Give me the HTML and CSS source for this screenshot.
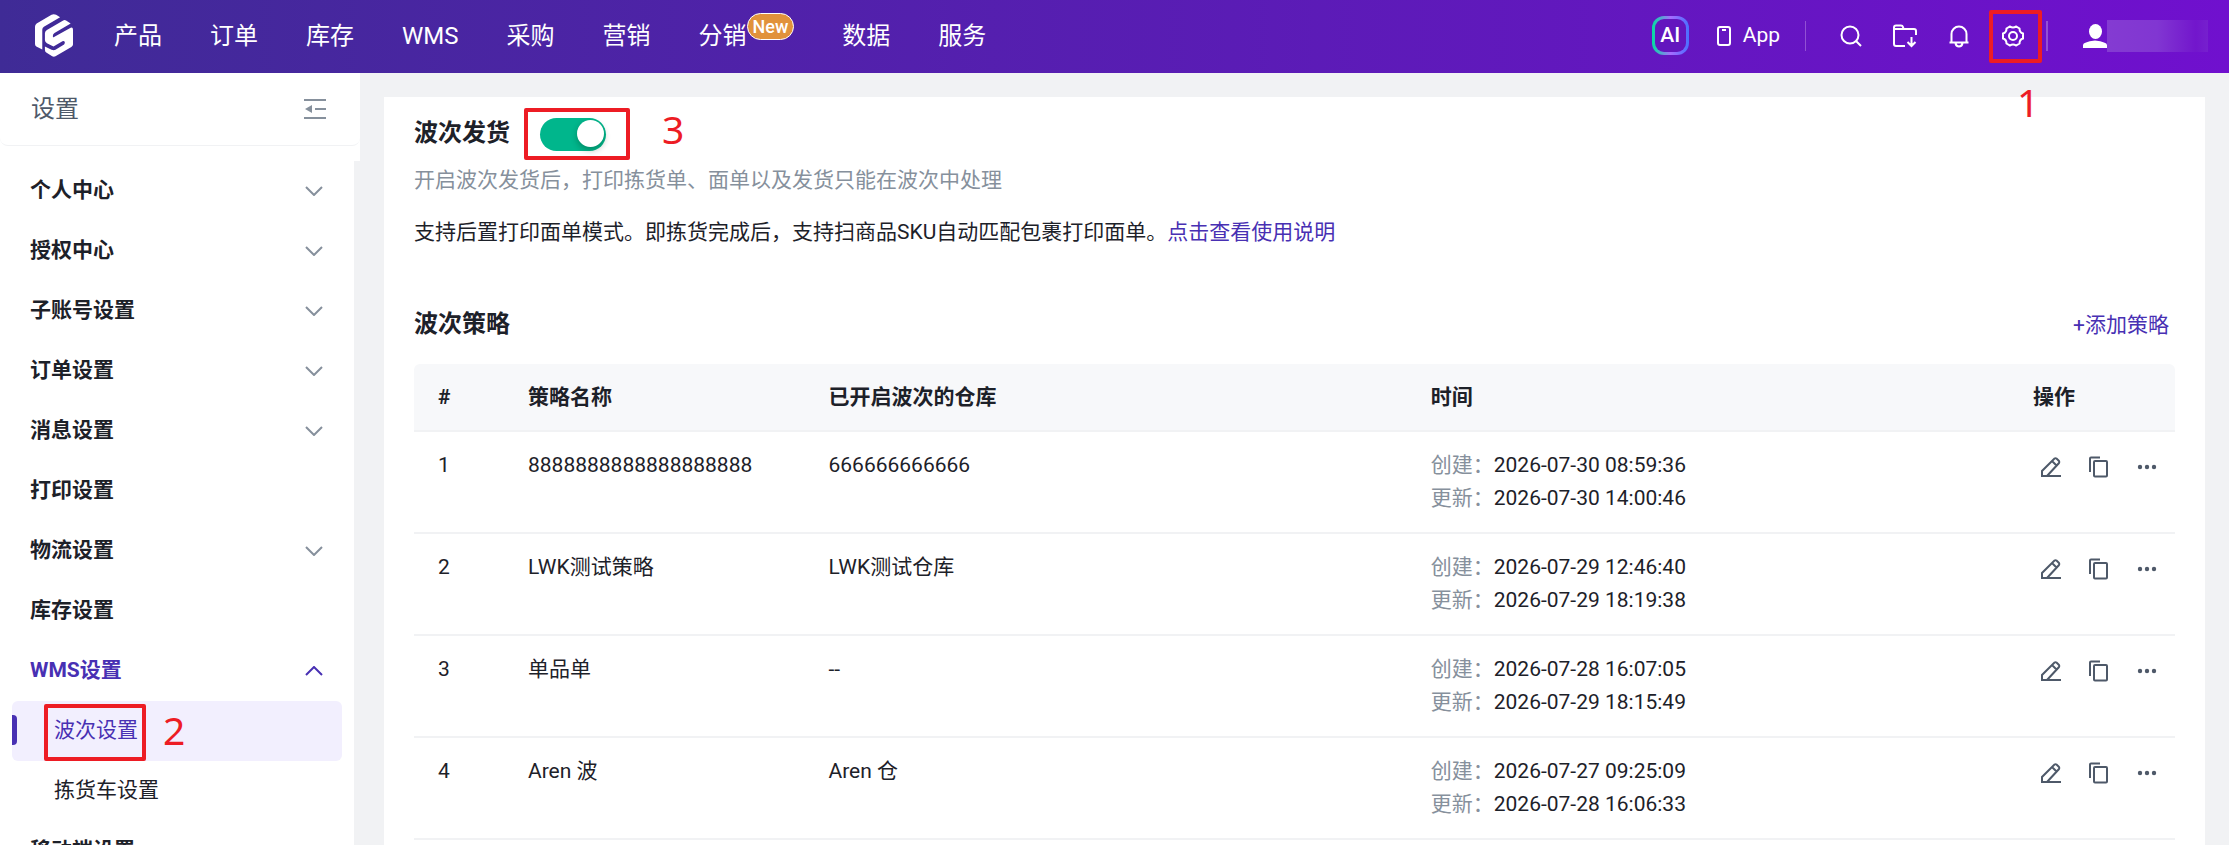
FILE: index.html
```html
<!DOCTYPE html>
<html lang="zh-CN">
<head>
  <meta charset="UTF-8" />
  <meta name="viewport" content="width=device-width, initial-scale=1.0"/>
  <title>波次设置</title>
  <link rel="stylesheet" href="styles.css">
</head>
<body>
  <!-- shared icons -->
  <svg class="sprite" aria-hidden="true">
    <symbol id="i-down" viewBox="0 0 18 10"><path d="M1 1l8 8 8-8"/></symbol>
    <symbol id="i-up" viewBox="0 0 18 10"><path d="M1 9l8-8 8 8"/></symbol>
    <symbol id="i-edit" viewBox="0 0 24 24"><path d="M3 21v-5L15.500 3.500q1-.7 2 0l2.500 2.500q.7 1 0 2L8 21M13 6l4.500 4.500M2 21h20"/></symbol>
    <symbol id="i-copy" viewBox="0 0 24 24"><path d="M3 17V3.500q0-1 1-1h9"/><rect x="7" y="6" width="13" height="15.500" rx="1"/></symbol>
    <symbol id="i-more" viewBox="0 0 24 24"><circle cx="5" cy="12" r="2.200"/><circle cx="12" cy="12" r="2.200"/><circle cx="19" cy="12" r="2.200"/></symbol>
  </svg>

  <header class="topbar">
    <a href="#" class="logo" aria-label="首页">
      <svg viewBox="0 0 115 129"><path d="M50 2Q57-2 64 2L76 9 27 38Q22 41 22 47V107L4 98Q0 95 0 90V38Q0 32 5 28Z"/><path d="M84 20Q89 16 94 19L108 28 59 57Q54 60 54 66T59 68L108 41Q115 39 115 47V92Q115 96 110 99L62 127Q57 130 52 127L34 116Q30 114 30 108V98L50 108Q57 111 62 108L88 92Q91 88 90 84 88 79 83 82L56 98 36 88Q30 84 30 78V58Q30 52 36 48Z"/></svg>
    </a>
    <nav class="menu">
      <a href="#">产品</a>
      <a href="#">订单</a>
      <a href="#">库存</a>
      <a href="#">WMS</a>
      <a href="#">采购</a>
      <a href="#">营销</a>
      <a href="#">分销<span class="badge">New</span></a>
      <a href="#">数据</a>
      <a href="#">服务</a>
    </nav>
    <div class="tools">
      <button type="button" class="ai">AI</button>
      <a href="#" class="app">
        <svg viewBox="0 0 14 20"><rect x="1" y="1" width="12" height="18" rx="2"/><path d="M5 4h4"/></svg>
        App
      </a>
      <span class="divider"></span>
      <button type="button" class="tool" aria-label="搜索">
        <svg viewBox="0 0 24 24"><circle cx="11" cy="11" r="8.500"/><path d="M17 17l5 5"/></svg>
      </button>
      <button type="button" class="tool" aria-label="下载">
        <svg viewBox="0 0 24 24"><path d="M12 22H3q-2 0-2-2V3.500q0-2 2-2h5q1.500 0 2 1.500l.5 2H21q2 0 2 2V11M1 5h10M18.500 13v9M14.500 18l4 4 4-4"/></svg>
      </button>
      <button type="button" class="tool" aria-label="通知">
        <svg viewBox="0 0 24 24"><path d="M2.500 18.500h19M4.500 18v-8a7.500 7.500 0 0 1 15 0v8M8.500 19q.5 3.500 3.500 3.500t3.500-3.500"/></svg>
      </button>
      <button type="button" class="tool marked" aria-label="设置">
        <svg viewBox="0 0 24 24"><path d="M9 2.500q3 2 6 0l3.500 2q0 4 3.500 5v5q-3.500 1-3.500 5l-3.500 2q-3-2-6 0l-3.500-2q0-4-3.500-5v-5q3.500-1 3.500-5z"/><circle cx="12" cy="12" r="4"/></svg>
        <span class="mark mark-gear"></span>
        <span class="step step-gear">1</span>
      </button>
      <span class="divider bold"></span>
      <div class="user">
        <svg viewBox="0 0 24 24"><ellipse cx="12.500" cy="7.500" rx="6.500" ry="7.500"/><path d="M0 24v-3q0-3 12-4.500Q24 18 24 21v3z"/></svg>
        <span class="user-name"></span>
      </div>
    </div>
  </header>

  <div class="layout">
    <aside class="sidebar">
      <div class="side-head">
        <span>设置</span>
        <button type="button" aria-label="收起">
          <svg viewBox="0 0 22 20"><path d="M0 1h22M11 10h11M0 19h22"/><path class="tri" d="M8 6v8l-7-4z"/></svg>
        </button>
      </div>
      <nav class="side-list">
        <a href="#" class="group">个人中心<svg><use href="#i-down"/></svg></a>
        <a href="#" class="group">授权中心<svg><use href="#i-down"/></svg></a>
        <a href="#" class="group">子账号设置<svg><use href="#i-down"/></svg></a>
        <a href="#" class="group">订单设置<svg><use href="#i-down"/></svg></a>
        <a href="#" class="group">消息设置<svg><use href="#i-down"/></svg></a>
        <a href="#" class="group">打印设置</a>
        <a href="#" class="group">物流设置<svg><use href="#i-down"/></svg></a>
        <a href="#" class="group">库存设置</a>
        <a href="#" class="group open">WMS设置<svg><use href="#i-up"/></svg></a>
        <a href="#" class="sub active">
          <span class="marked">波次设置<span class="mark mark-menu"></span><span class="step step-menu">2</span></span>
        </a>
        <a href="#" class="sub">拣货车设置</a>
        <a href="#" class="group">移动端设置</a>
      </nav>
    </aside>

    <main class="panel">
      <section class="intro">
        <div class="switch-row">
          <label for="wave"><h1>波次发货</h1></label>
          <span class="marked">
            <input type="checkbox" id="wave" class="switch" checked />
            <span class="mark mark-switch"></span>
            <span class="step step-switch">3</span>
          </span>
        </div>
        <p class="hint">开启波次发货后，打印拣货单、面单以及发货只能在波次中处理</p>
        <p>支持后置打印面单模式。即拣货完成后，支持扫商品SKU自动匹配包裹打印面单。<a href="#">点击查看使用说明</a></p>
      </section>

      <div class="list-head">
        <h2>波次策略</h2>
        <a href="#">+添加策略</a>
      </div>

      <table>
        <colgroup>
          <col class="c-index" /><col /><col class="c-store" /><col class="c-time" /><col class="c-action" />
        </colgroup>
        <thead>
          <tr><th>#</th><th>策略名称</th><th>已开启波次的仓库</th><th>时间</th><th>操作</th></tr>
        </thead>
        <tbody>
          <tr>
            <td>1</td>
            <td>8888888888888888888</td>
            <td>666666666666</td>
            <td><span>创建：</span>2026-07-30 08:59:36<br><span>更新：</span>2026-07-30 14:00:46</td>
            <td><div class="actions">
              <button type="button" aria-label="编辑"><svg><use href="#i-edit"/></svg></button>
              <button type="button" aria-label="复制"><svg><use href="#i-copy"/></svg></button>
              <button type="button" aria-label="更多" class="more"><svg><use href="#i-more"/></svg></button>
            </div></td>
          </tr>
          <tr>
            <td>2</td>
            <td>LWK测试策略</td>
            <td>LWK测试仓库</td>
            <td><span>创建：</span>2026-07-29 12:46:40<br><span>更新：</span>2026-07-29 18:19:38</td>
            <td><div class="actions">
              <button type="button" aria-label="编辑"><svg><use href="#i-edit"/></svg></button>
              <button type="button" aria-label="复制"><svg><use href="#i-copy"/></svg></button>
              <button type="button" aria-label="更多" class="more"><svg><use href="#i-more"/></svg></button>
            </div></td>
          </tr>
          <tr>
            <td>3</td>
            <td>单品单</td>
            <td>--</td>
            <td><span>创建：</span>2026-07-28 16:07:05<br><span>更新：</span>2026-07-29 18:15:49</td>
            <td><div class="actions">
              <button type="button" aria-label="编辑"><svg><use href="#i-edit"/></svg></button>
              <button type="button" aria-label="复制"><svg><use href="#i-copy"/></svg></button>
              <button type="button" aria-label="更多" class="more"><svg><use href="#i-more"/></svg></button>
            </div></td>
          </tr>
          <tr>
            <td>4</td>
            <td>Aren 波</td>
            <td>Aren 仓</td>
            <td><span>创建：</span>2026-07-27 09:25:09<br><span>更新：</span>2026-07-28 16:06:33</td>
            <td><div class="actions">
              <button type="button" aria-label="编辑"><svg><use href="#i-edit"/></svg></button>
              <button type="button" aria-label="复制"><svg><use href="#i-copy"/></svg></button>
              <button type="button" aria-label="更多" class="more"><svg><use href="#i-more"/></svg></button>
            </div></td>
          </tr>
        </tbody>
      </table>
    </main>
  </div>
</body>
</html>
```

FILE: styles.css
```css
* {
  box-sizing: border-box;
}

body {
  margin: 0;
  height: 100vh;
  display: flex;
  flex-direction: column;
  overflow: hidden;
  font-family: Roboto, "Noto Sans CJK SC", sans-serif;
  font-size: 21px;
  line-height: 33px;
  color: #1d2129;
  background-color: #f1f2f4;
}

h1, h2, p {
  margin: 0;
}

h1, h2 {
  font-size: 24px;
  line-height: 36px;
  font-weight: bold;
}

a {
  color: #4830b3;
  text-decoration: none;
}

button {
  padding: 0;
  border: none;
  background: none;
  color: inherit;
  font: inherit;
  cursor: pointer;
}

svg {
  display: block;
  fill: none;
  stroke: currentColor;
  stroke-width: 2;
}

.sprite {
  position: absolute;
  width: 0;
  height: 0;
}

/* top bar */
.topbar {
  flex: none;
  height: 73px;
  padding: 0 21px 2px 35px;
  display: flex;
  align-items: center;
  background: linear-gradient(90deg, #3f2b96, #7010ce);
  color: #fff;
}

.logo svg {
  width: 38px;
  height: 43px;
  fill: #fff;
  stroke: none;
}

.menu {
  display: flex;
  gap: 48px;
  margin-left: 41px;
  font-size: 24px;
  line-height: 36px;
}

.menu a {
  display: flex;
  color: #fff;
}

.badge {
  height: 27px;
  margin-top: -5px;
  padding: 0 5px;
  border: 1px solid #fff;
  border-radius: 14px;
  background-color: #e1923b;
  font-size: 18px;
  line-height: 25px;
  font-weight: 500;
}

.tools {
  display: flex;
  align-items: center;
  margin-left: auto;
}

.ai {
  width: 37px;
  height: 39px;
  border: 3px solid transparent;
  border-radius: 12px;
  background: linear-gradient(#6316be, #6316be) padding-box, linear-gradient(90deg, #00e0a0, #a66bff 50%, #4a70ff) border-box;
  font-size: 21px;
  line-height: 33px;
  font-weight: 500;
}

.app {
  display: flex;
  align-items: center;
  gap: 12px;
  margin: 0 25px 0 28px;
  color: #fff;
}

.app svg {
  width: 14px;
  height: 20px;
}

.divider {
  width: 1px;
  height: 30px;
  margin-right: 33px;
  background-color: #9250d4;
}

.divider.bold {
  width: 2px;
  margin: 0 35px 0 21px;
}

.tool {
  margin-right: 30px;
}

.tool svg {
  width: 24px;
  height: 24px;
}

.tool.marked {
  margin-right: 0;
}

.user {
  display: flex;
  align-items: center;
}

.user svg {
  width: 24px;
  height: 24px;
  fill: #fff;
  stroke: none;
}

.user-name {
  width: 101px;
  height: 32px;
  background: linear-gradient(90deg, #843bd2, #8136d2 50%, #7216cc 88%, #7620ce);
}

/* red step marks over the controls */
.marked {
  position: relative;
}

.mark {
  position: absolute;
  border: 4px solid #ed1c24;
  border-radius: 2px;
}

.mark-gear {
  inset: -14px -17px -15px -12px;
}

.mark-menu {
  inset: -10px -8px -14px -10px;
}

.mark-switch {
  inset: -10px -24px -9px -16px;
}

.step {
  position: absolute;
  color: #ed1c24;
  font-family: "Noto Sans", sans-serif;
  font-size: 39px;
  line-height: 40px;
  font-weight: normal;
}

.step-gear {
  left: 16px;
  top: 58px;
}

.step-menu {
  left: 109px;
  top: -4px;
}

.step-switch {
  left: 122px;
  top: -9px;
}

/* layout */
.layout {
  flex: 1;
  min-height: 0;
  display: flex;
}

.sidebar {
  flex: none;
  width: 360px;
  display: flex;
  flex-direction: column;
  background-color: #fff;
}

.side-head {
  flex: none;
  height: 73px;
  padding: 0 34px 0 31px;
  display: flex;
  align-items: center;
  justify-content: space-between;
  border-bottom: 1px solid #f1f2f4;
  border-radius: 0 0 8px 8px;
  font-size: 24px;
  color: #4e5969;
}

.side-head svg {
  width: 22px;
  height: 20px;
  color: #86909c;
}

.tri {
  fill: currentColor;
  stroke: none;
}

.side-list {
  flex: 1;
  min-height: 0;
  margin-top: 15px;
  padding: 0 12px;
  overflow: hidden;
  border-right: 6px solid #f1f2f4;
}

.side-list a {
  height: 60px;
  padding-bottom: 2px;
  display: flex;
  align-items: center;
  color: #1d2129;
}

.side-list .group {
  justify-content: space-between;
  padding-left: 18px;
  padding-right: 19px;
  font-weight: bold;
}

.side-list svg {
  width: 18px;
  height: 10px;
  margin-top: 2px;
  color: #86909c;
}

.side-list .open, .side-list .open svg {
  color: #4830b3;
}

.side-list .sub {
  padding-left: 42px;
}

.side-list .active {
  border-radius: 6px;
  background-color: #f2effe;
  color: #4830b3;
}

.side-list .active::before {
  content: "";
  width: 5px;
  height: 30px;
  margin-left: -42px;
  margin-right: 37px;
  border-radius: 0 4px 4px 0;
  background-color: #4830b3;
}

.panel {
  flex: 1;
  min-width: 0;
  margin: 24px 24px 0;
  padding: 18px 30px 0;
  background-color: #fff;
}

.switch-row {
  display: flex;
  align-items: flex-end;
  gap: 30px;
}

.switch {
  display: block;
  appearance: none;
  width: 66px;
  height: 33px;
  margin: 0;
  padding: 2px 2px 4px;
  border-radius: 17px;
  background-color: #00b68c;
}

.switch::before {
  content: "";
  display: block;
  width: 27px;
  height: 27px;
  border-radius: 50%;
  background-color: #fff;
  box-shadow: 0 3px 6px rgba(0,35,11,0.3);
}

.switch:checked::before {
  margin-left: auto;
}

.hint {
  margin: 13px 0 19px;
  color: #86909c;
}

.list-head {
  display: flex;
  align-items: flex-end;
  justify-content: space-between;
  margin: 57px 0 22px;
  padding-right: 6px;
}

table {
  width: 100%;
  table-layout: fixed;
  border-collapse: separate;
  border-spacing: 0;
}

.c-index {
  width: 90px;
}

.c-store, .c-time {
  width: 34.2%;
}

.c-action {
  width: 166px;
}

th, td {
  padding: 17px 24px;
  text-align: left;
  vertical-align: top;
  border-bottom: 2px solid #f1f2f4;
}

th {
  padding-bottom: 16px;
  background-color: #f7f8fa;
}

th:first-child {
  border-top-left-radius: 6px;
}

th:last-child {
  border-top-right-radius: 6px;
}

td:last-child {
  padding-right: 0;
}

td span {
  color: #86909c;
}

.actions {
  display: flex;
  gap: 12px;
}

.actions button {
  width: 36px;
  height: 36px;
  display: flex;
  align-items: center;
  justify-content: center;
  color: #4e5969;
}

.actions svg {
  width: 24px;
  height: 24px;
}

.actions .more svg {
  fill: currentColor;
  stroke: none;
}
```
